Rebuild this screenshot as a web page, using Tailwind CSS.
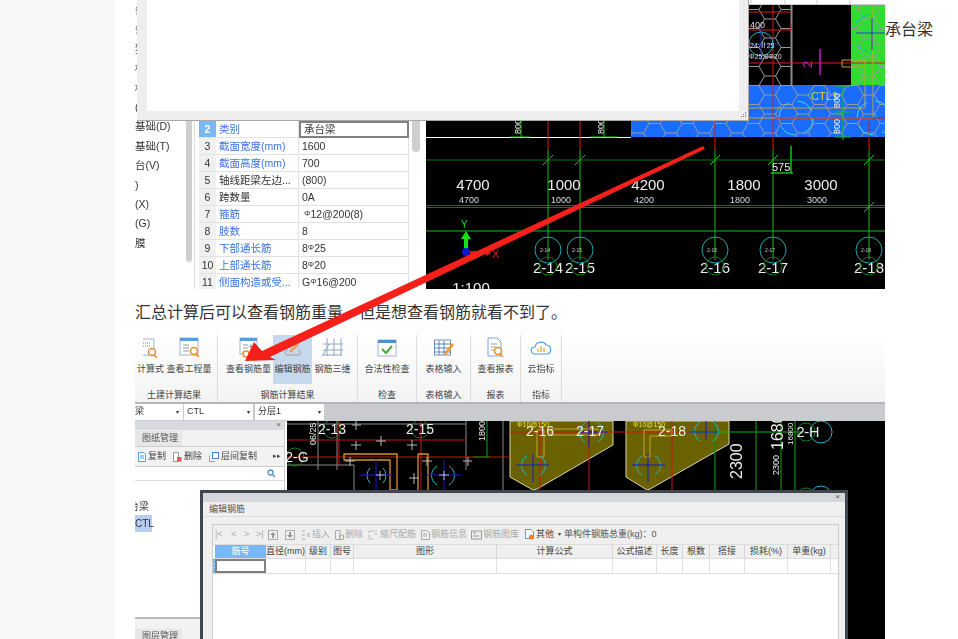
<!DOCTYPE html>
<html lang="zh-CN">
  <head>
    <meta charset="UTF-8" />
    <title>汇总计算后查看钢筋</title>
    <script src="https://cdn.jsdelivr.net/npm/@tailwindcss/browser@4"></script>
  </head>
  <body class="h-[639px] overflow-hidden bg-white font-['Liberation_Sans','Noto_Sans_CJK_SC',sans-serif] text-[#333]">
    <div class="flex h-[639px] relative">
      <div class="w-[115px] shrink-0 bg-[#f8f8f8]"></div>

      <main class="w-[770px] pl-[20px] shrink-0 relative">
        <!-- first screenshot -->
        <section class="relative h-[289px] w-[750px] flex overflow-visible">
          <div class="flex w-full h-[289px] overflow-hidden blur-[0.3px]">
            <!-- element list -->
            <div class="w-[51px] shrink-0 relative overflow-hidden bg-white pt-[1px] text-[10.5px] leading-[19.4px] text-[#333] whitespace-nowrap">
              <div>条</div><div>条</div><div>独</div><div>桩</div><div>桩</div><div>(</div>
              <div>基础(D)</div><div>基础(T)</div><div>台(V)</div><div>)</div><div>(X)</div><div>(G)</div><div>膜</div>
            </div>
            <div class="w-[7px] shrink-0 bg-white pt-[121px]"><div class="h-[141px] w-[6px] rounded-b bg-[#cfcfcf]"></div></div>
            <div class="w-[2px] shrink-0 bg-white border-r border-[#ddd]"></div>
            <!-- property table -->
            <div class="w-[231px] shrink-0 pl-[4px] pt-[121px] bg-white flex">
              <div class="w-[210px] text-[10.5px] leading-[16px] text-[#333]">
                <div class="flex h-[17px]"><div class="w-[17px] bg-[#7ab8f5] text-white font-bold text-center border-b border-[#e2e2e2]">2</div><div class="w-[83px] pl-[3px] text-[#3d73e6] border-b border-r border-[#e2e2e2]">类别</div><div class="w-[110px] pl-[3px] border-2 border-[#808080] leading-[13px]">承台梁</div></div>
                <div class="flex h-[17px]"><div class="w-[17px] bg-[#f0f0f0] text-center border-b border-[#e2e2e2]">3</div><div class="w-[83px] pl-[3px] text-[#3d73e6] border-b border-r border-[#e2e2e2]">截面宽度(mm)</div><div class="w-[110px] pl-[3px] border-b border-r border-[#e2e2e2]">1600</div></div>
                <div class="flex h-[17px]"><div class="w-[17px] bg-[#f0f0f0] text-center border-b border-[#e2e2e2]">4</div><div class="w-[83px] pl-[3px] text-[#3d73e6] border-b border-r border-[#e2e2e2]">截面高度(mm)</div><div class="w-[110px] pl-[3px] border-b border-r border-[#e2e2e2]">700</div></div>
                <div class="flex h-[17px]"><div class="w-[17px] bg-[#f0f0f0] text-center border-b border-[#e2e2e2]">5</div><div class="w-[83px] pl-[3px] border-b border-r border-[#e2e2e2]">轴线距梁左边...</div><div class="w-[110px] pl-[3px] border-b border-r border-[#e2e2e2]">(800)</div></div>
                <div class="flex h-[17px]"><div class="w-[17px] bg-[#f0f0f0] text-center border-b border-[#e2e2e2]">6</div><div class="w-[83px] pl-[3px] border-b border-r border-[#e2e2e2]">跨数量</div><div class="w-[110px] pl-[3px] border-b border-r border-[#e2e2e2]">0A</div></div>
                <div class="flex h-[17px]"><div class="w-[17px] bg-[#f0f0f0] text-center border-b border-[#e2e2e2]">7</div><div class="w-[83px] pl-[3px] text-[#3d73e6] border-b border-r border-[#e2e2e2]">箍筋</div><div class="w-[110px] pl-[3px] border-b border-r border-[#e2e2e2]"><span class="text-[8px] align-[2px] ml-[2px]">Φ</span>12@200(8)</div></div>
                <div class="flex h-[17px]"><div class="w-[17px] bg-[#f0f0f0] text-center border-b border-[#e2e2e2]">8</div><div class="w-[83px] pl-[3px] text-[#3d73e6] border-b border-r border-[#e2e2e2]">肢数</div><div class="w-[110px] pl-[3px] border-b border-r border-[#e2e2e2]">8</div></div>
                <div class="flex h-[17px]"><div class="w-[17px] bg-[#f0f0f0] text-center border-b border-[#e2e2e2]">9</div><div class="w-[83px] pl-[3px] text-[#3d73e6] border-b border-r border-[#e2e2e2]">下部通长筋</div><div class="w-[110px] pl-[3px] border-b border-r border-[#e2e2e2]">8<span class="text-[8px] align-[2px]">Φ</span>25</div></div>
                <div class="flex h-[17px]"><div class="w-[17px] bg-[#f0f0f0] text-center border-b border-[#e2e2e2]">10</div><div class="w-[83px] pl-[3px] text-[#3d73e6] border-b border-r border-[#e2e2e2]">上部通长筋</div><div class="w-[110px] pl-[3px] border-b border-r border-[#e2e2e2]">8<span class="text-[8px] align-[2px]">Φ</span>20</div></div>
                <div class="flex h-[17px]"><div class="w-[17px] bg-[#f0f0f0] text-center border-b border-[#e2e2e2]">11</div><div class="w-[83px] pl-[3px] text-[#3d73e6] border-b border-r border-[#e2e2e2]">侧面构造或受...</div><div class="w-[110px] pl-[3px] border-b border-r border-[#e2e2e2]">G<span class="text-[8px] align-[2px]">Φ</span>16@200</div></div>
              </div>
              <div class="ml-[3px] w-[8px] h-[31px] rounded-b bg-[#cfcfcf]"></div>
            </div>
            <!-- CAD view, coordinates in viewBox match the page -->
            <svg class="shrink-0 block" width="459" height="289" viewBox="426 0 459 289">
              <defs>
                <pattern id="hex" width="33" height="19" patternUnits="userSpaceOnUse">
                  <path d="M0 9.5L5.5 0H16.5L22 9.5L16.5 19H5.5ZM22 9.5H33" fill="none" stroke="#9a9a9a" stroke-width="1" />
                </pattern>
              </defs>
              <rect x="426" y="0" width="459" height="289" fill="#000" />
              <rect x="700" y="0" width="185" height="5" fill="#fff" />
              <path d="M719 0V4.500H885M751 0V4M785 0V4M817 0V4M850 0V4" stroke="#ccc" fill="none" />
              <rect x="749" y="5" width="42" height="80" fill="url(#hex)" />
              <path d="M791.500 5V85" stroke="#888" stroke-width="2" />
              <rect x="851" y="5" width="34" height="80" fill="#2fdc2f" />
              <rect x="851" y="5" width="34" height="80" fill="url(#hex)" />
              <rect x="631" y="85" width="254" height="52" fill="#1a6cff" />
              <rect x="631" y="85" width="254" height="52" fill="url(#hex)" />
              <path d="M426 137.500H631" stroke="#fff" />
              <path d="M749 12H791M749 30H791M791 24V30M749 63H885" stroke="#d81818" />
              <path d="M773 5V150M548 121V150M580 121V150M715 121V150M869 121V150" stroke="#d81818" />
              <path d="M749 108H865V67M749 118H873V5M842 60H865V67H842Z" stroke="#c9a227" fill="none" />
              <path d="M820 49V75" stroke="#d015d0" stroke-width="1.500" />
              <text x="0" y="0" transform="translate(812 68) rotate(-90)" font-size="13" fill="#d015d0">2</text>
              <circle cx="761" cy="44" r="12" fill="none" stroke="#15b5c5" />
              <path d="M761 28V60M745 44H778" stroke="#2030d0" />
              <text x="750" y="28" font-size="9" fill="#ddd">400</text>
              <text x="750" y="48" font-size="7" fill="#ddd">24:Ⅱ25</text>
              <text x="749" y="59" font-size="7" fill="#ddd">Φ25;8Φ20</text>
              <path d="M856 33H885M872 18V50" stroke="#1a40e0" />
              <path d="M857 22A18 18 0 0 1 870 15M857 45A18 18 0 0 0 872 52" stroke="#15b5c5" fill="none" />
              <circle cx="796" cy="118" r="17" fill="none" stroke="#35e0e8" stroke-dasharray="18 9" />
              <circle cx="874" cy="118" r="17" fill="none" stroke="#35e0e8" stroke-dasharray="18 9" />
              <path d="M775 118H885" stroke="#d81818" />
              <text x="811" y="100" font-size="11" fill="#d8d838">CTL1</text>
              <path d="M843 85V140M835 86H851M835 112H851M835 137H851" stroke="#18c018" />
              <text transform="translate(840 108) rotate(-90)" font-size="9" fill="#eee">800</text>
              <text transform="translate(840 134) rotate(-90)" font-size="9" fill="#eee">800</text>
              <text transform="translate(521 134) rotate(-90)" font-size="9" fill="#eee">800</text>
              <text transform="translate(604 134) rotate(-90)" font-size="9" fill="#eee">800</text>
              <path d="M521 121V137M604 121V137M510 137H530M590 137H618" stroke="#18c018" />
              <path d="M426 160H885M426 205.500H885M426 207.500H885" stroke="#0d7a0d" stroke-width="1.200" />
              <path d="M426 231H885" stroke="#12c012" />
              <path d="M548 150V260M580 150V260M715 150V260M773 150V260M869 150V260" stroke="#12c012" />
              <path d="M543 165L553 155M575 165L585 155M710 165L720 155M768 165L778 155M864 165L874 155M864 212L874 202" stroke="#12c012" />
              <path d="M791 146V173M771 173H793" stroke="#12c012" stroke-width="1.500" />
              <text x="772" y="171" font-size="11" fill="#eee">575</text>
              <g fill="#eee" font-size="15" text-anchor="middle">
                <text x="473" y="190">4700</text>
                <text x="564" y="190">1000</text>
                <text x="648" y="190">4200</text>
                <text x="744" y="190">1800</text>
                <text x="821" y="190">3000</text>
                <text x="548" y="273">2-14</text>
                <text x="580" y="273">2-15</text>
                <text x="715" y="273">2-16</text>
                <text x="773" y="273">2-17</text>
                <text x="869" y="273">2-18</text>
                <text x="471" y="293">1:100</text>
              </g>
              <g fill="#ddd" font-size="9" text-anchor="middle">
                <text x="469" y="203">4700</text>
                <text x="561" y="203">1000</text>
                <text x="644" y="203">4200</text>
                <text x="740" y="203">1800</text>
                <text x="817" y="203">3000</text>
              </g>
              <g fill="none" stroke="#18a8a8">
                <circle cx="548" cy="250" r="13" /><circle cx="580" cy="250" r="13" /><circle cx="715" cy="250" r="13" /><circle cx="773" cy="250" r="13" /><circle cx="869" cy="250" r="13" />
              </g>
              <g fill="none" stroke="#0b7a0b">
                <circle cx="548" cy="266" r="9" /><circle cx="580" cy="266" r="9" /><circle cx="715" cy="266" r="9" /><circle cx="773" cy="266" r="9" /><circle cx="869" cy="266" r="9" />
              </g>
              <g fill="#ccc" font-size="5" text-anchor="middle">
                <text x="545" y="252">2-14</text><text x="577" y="252">2-15</text><text x="712" y="252">2-16</text><text x="770" y="252">2-17</text><text x="866" y="252">2-18</text>
              </g>
              <path d="M464 249V239H461L466 231L471 239H468V249Z" fill="#15e015" />
              <circle cx="466" cy="252" r="4" fill="#1414d0" />
              <path d="M470 251H486V249L491 253L486 256V254H470Z" fill="#e01818" />
              <text x="492" y="258" font-size="11" fill="#e01818">X</text>
              <text x="461" y="228" font-size="10" fill="#15e015">Y</text>
            </svg>
          </div>

          <!-- popup covering the top of the screenshot -->
          <div class="absolute left-[2px] top-0 w-[612px] h-[121px] bg-[#eeeeee] border-b border-r border-[#a8a8a8] pl-[10px] pr-[9px] pb-[9px]">
            <div class="h-full bg-white"></div>
            <svg class="absolute right-[1px] bottom-[1px]" width="8" height="8" viewBox="0 0 8 8"><path d="M6 1h1v1H6zM4 3h1v1H4zM6 3h1v1H6zM2 5h1v1H2zM4 5h1v1H4zM6 5h1v1H6z" fill="#777" /></svg>
          </div>
          <div class="absolute left-[750px] top-[20px] text-[16px] leading-[20px] whitespace-nowrap text-[#333]">承台梁</div>
        </section>

        <p class="h-[46px] pt-[13px] text-[16px] leading-[22px] text-[#333] whitespace-nowrap">汇总计算后可以查看钢筋重量，但是想查看钢筋就看不到了。</p>

        <!-- second screenshot -->
        <section class="relative h-[304px] w-[750px] overflow-hidden blur-[0.3px]">
          <!-- ribbon -->
          <div class="h-[67px] bg-gradient-to-b from-white to-[#f3f3f3] flex text-[9px] text-[#444] whitespace-nowrap">
            <div class="w-[83px] border-r border-[#dcdcdc] flex flex-col">
              <div class="h-[49px] flex">
                <div class="w-[31px] flex flex-col items-center pt-[2px]">
                  <svg width="16" height="22" viewBox="0 0 16 22"><rect x="-4" y="2" width="15" height="16" fill="#fff" stroke="#9db6d4" /><path d="M0 6h8M0 9h8" stroke="#c66" stroke-dasharray="1 1" /><circle cx="9" cy="15" r="3.500" fill="#fff" stroke="#e88b2a" stroke-width="1.500" /><path d="M11 18l3 3" stroke="#e88b2a" stroke-width="1.500" /></svg>
                  <span class="mt-[4px]">计算式</span>
                </div>
                <div class="w-[46px] flex flex-col items-center pt-[2px]">
                  <svg width="21" height="22" viewBox="0 0 21 22"><rect x="1" y="1" width="18" height="17" fill="#fff" stroke="#9db6d4" /><rect x="1" y="1" width="18" height="3" fill="#5b9bd8" /><path d="M4 8h6M4 11h6M4 14h6" stroke="#999" /><circle cx="15" cy="14" r="3.500" fill="#fff" stroke="#e88b2a" stroke-width="1.500" /><path d="M17 17l3 3" stroke="#e88b2a" stroke-width="1.500" /></svg>
                  <span class="mt-[4px]">查看工程量</span>
                </div>
              </div>
              <div class="text-center pr-[4px] leading-[12px] mt-[5px]">土建计算结果</div>
            </div>
            <div class="w-[140px] border-r border-[#dcdcdc] flex flex-col">
              <div class="h-[49px] flex pl-[6px]">
                <div class="w-[49px] flex flex-col items-center pt-[2px]">
                  <svg width="20" height="22" viewBox="0 0 20 22"><rect x="1" y="1" width="17" height="16" fill="#fff" stroke="#9db6d4" /><rect x="1" y="1" width="17" height="3" fill="#5b9bd8" /><path d="M4 8h5M4 11h5M12 7v5M10 9.500h5" stroke="#999" /><circle cx="7" cy="17" r="3" fill="#fff" stroke="#e88b2a" stroke-width="1.500" /><path d="M10 17h7" stroke="#e88b2a" stroke-width="1.500" /></svg>
                  <span class="mt-[4px]">查看钢筋量</span>
                </div>
                <div class="w-[39px] bg-[#c7d9ef] flex flex-col items-center pt-[2px]">
                  <svg width="20" height="22" viewBox="0 0 20 22"><path d="M2 16C2 13 4 13 5 13M15 13C18 13 18 18 15 18H5C3 18 2 17 2 16" fill="none" stroke="#999" /><path d="M6 14L14 6L16 8L8 16Z" fill="#f0a060" /></svg>
                  <span class="mt-[4px]">编辑钢筋</span>
                </div>
                <div class="w-[41px] flex flex-col items-center pt-[2px]">
                  <svg width="22" height="22" viewBox="0 0 22 22"><path d="M1 7H21M1 13H21M0 18H20M5 1V19M12 1V19M19 1V19M1 18L7 7" fill="none" stroke="#8fa8c8" /></svg>
                  <span class="mt-[4px]">钢筋三维</span>
                </div>
              </div>
              <div class="text-center leading-[12px] mt-[5px]">钢筋计算结果</div>
            </div>
            <div class="w-[59px] border-r border-[#dcdcdc] flex flex-col">
              <div class="h-[49px] flex flex-col items-center pt-[3px]">
                <svg width="20" height="21" viewBox="0 0 20 21"><rect x="1" y="2" width="18" height="16" fill="#fff" stroke="#9db6d4" /><rect x="1" y="2" width="18" height="3" fill="#4f8fd0" /><path d="M5 11L9 15L15 8" fill="none" stroke="#48a838" stroke-width="2" /></svg>
                <span class="mt-[4px]">合法性检查</span>
              </div>
              <div class="text-center leading-[12px] mt-[5px]">检查</div>
            </div>
            <div class="w-[54px] border-r border-[#dcdcdc] flex flex-col">
              <div class="h-[49px] flex flex-col items-center pt-[3px]">
                <svg width="20" height="21" viewBox="0 0 20 21"><rect x="0.500" y="2" width="16" height="15" fill="#fff" stroke="#6f8fb8" /><path d="M0 6H17M0 10H17M0 14H17M5 3V17M10 3V17" stroke="#5b86bc" /><path d="M10 15L18 5L20 7L12 17Z" fill="#f09a30" /></svg>
                <span class="mt-[4px]">表格输入</span>
              </div>
              <div class="text-center leading-[12px] mt-[5px]">表格输入</div>
            </div>
            <div class="w-[50px] border-r border-[#dcdcdc] flex flex-col">
              <div class="h-[49px] flex flex-col items-center pt-[2px]">
                <svg width="18" height="22" viewBox="0 0 18 22"><path d="M1 1H10L14 5V19H1Z" fill="#fff" stroke="#7fa6cf" /><path d="M4 7H10M4 10H9M4 13H7" stroke="#999" /><circle cx="11" cy="14" r="3.500" fill="#fff" stroke="#e88b2a" stroke-width="1.500" /><path d="M13 17l3 3" stroke="#e88b2a" stroke-width="1.500" /></svg>
                <span class="mt-[4px]">查看报表</span>
              </div>
              <div class="text-center leading-[12px] mt-[5px]">报表</div>
            </div>
            <div class="w-[41px] border-r border-[#dcdcdc] flex flex-col">
              <div class="h-[49px] flex flex-col items-center pt-[3px]">
                <svg width="24" height="21" viewBox="0 0 24 21"><path d="M6 16C1 16 1 9 6 9C7 3 15 3 17 7C23 7 23 16 18 16Z" fill="#fff" stroke="#4f9fe0" stroke-width="1.200" /><path d="M9 14V11M12 14V8M15 14V10" stroke="#f0a030" stroke-width="1.300" /></svg>
                <span class="mt-[4px]">云指标</span>
              </div>
              <div class="text-center leading-[12px] mt-[5px]">指标</div>
            </div>
          </div>

          <!-- combo row -->
          <div class="h-[19px] bg-[#c9cbcf] border-t-2 border-[#b4b6ba] flex gap-[1px] text-[9px] text-[#333]">
            <div class="w-[48px] h-[16px] bg-white flex items-center justify-between pr-[4px]">梁<span class="text-[6px]">▾</span></div>
            <div class="w-[69px] h-[16px] bg-white flex items-center justify-between px-[3px]">CTL<span class="text-[6px]">▾</span></div>
            <div class="w-[69px] h-[16px] ml-[1px] bg-white flex items-center justify-between px-[3px]">分层1<span class="text-[6px]">▾</span></div>
          </div>

          <div class="flex h-[218px]">
            <!-- navigator panel -->
            <div class="w-[150px] shrink-0 bg-white border-r border-[#ccc] flex flex-col text-[9px] text-[#555]">
              <div class="h-[9px] bg-[#d8dadd] relative"><span class="absolute right-[3px] -top-[2px] text-[8px] leading-[12px]">×</span></div>
              <div class="h-[17px] bg-[#f2f2f2] border-b border-[#ccc] flex items-end"><span class="w-[47px] h-[15px] pl-[7px] bg-[#e6e6e6] leading-[15px]">图纸管理</span></div>
              <div class="h-[20px] bg-[#f2f2f2] border-b border-[#ccc] flex items-center pl-[3px] text-[#444] whitespace-nowrap">
                <svg width="8" height="10" viewBox="0 0 8 10"><path d="M.5.5H5.500L7.500 2.500V9.500H.5Z M2 4H6M2 6H6" fill="#fff" stroke="#5b9bd8" /></svg>
                <span class="ml-[2px]">复制</span>
                <svg class="ml-[7px]" width="9" height="10" viewBox="0 0 9 10"><path d="M.5.5H5.500V9.500H.5Z" fill="#fff" stroke="#999" /><rect x="4" y="5" width="4.500" height="4.500" fill="#e05a5a" /></svg>
                <span class="ml-[2px]">删除</span>
                <svg class="ml-[7px]" width="10" height="10" viewBox="0 0 10 10"><rect x="3.500" y=".5" width="6" height="6" fill="#fff" stroke="#3f82d8" /><path d="M.5 3.500V9.500H6" fill="none" stroke="#f09030" /></svg>
                <span class="ml-[2px]">层间复制</span>
                <span class="ml-[16px] text-[7px]">▸▸</span>
              </div>
              <div class="h-[14px] border-b border-[#ddd] flex items-center justify-end pr-[8px]">
                <svg width="9" height="9" viewBox="0 0 9 9"><circle cx="3.500" cy="3.500" r="2.500" fill="none" stroke="#4f8fd0" stroke-width="1.300" /><path d="M5.500 5.500L8 8" stroke="#4f8fd0" stroke-width="1.300" /></svg>
              </div>
              <div class="h-[136px] pt-[17px] text-[10px] text-[#444] leading-[17px] overflow-hidden">
                <div class="-ml-[6px]">台梁</div>
                <div class="w-[17px] bg-[#b6cfee] text-[#333]">CTL</div>
              </div>
              <div class="border-t-2 border-[#bbb] h-[22px] bg-[#f2f2f2] pt-[10px]"><span class="block w-[47px] h-[12px] pl-[7px] bg-[#e6e6e6] leading-[14px]">图层管理</span></div>
            </div>
            <div class="w-[2px] bg-white"></div>
            <!-- CAD view 2 -->
            <svg class="shrink-0 block" width="598" height="218" viewBox="287 421 598 218">
              <rect x="287" y="421" width="598" height="218" fill="#000" />
              <path d="M510 421H613V445L537 489L533 490L510 477Z M626 421H729V444L650 489L647 490L626 477Z" fill="#6a6200" stroke="#d8d8a8" />
              <path d="M287 424H466M318 421V470M337 421V470M466 421V470M503 421V490M287 465H354V490" stroke="#8a8a8a" fill="none" />
              <path d="M287 440H466M287 457H510M510 432H690" stroke="#c81414" />
              <path d="M339 421V465M421 421V490M540 421V490M589 421V490M672 421V490" stroke="#c81414" />
              <path d="M690 432H806" stroke="#15b015" />
              <path d="M715 421V490M756 421V490M781 421V490M795 421V490M487 421V457M473 457H490" stroke="#118a11" stroke-width="1.200" />
              <path d="M344 454H397V490H390V460H344ZM418 454H428V490M418 454V490" fill="none" stroke="#d8951a" stroke-width="1.300" />
              <path d="M537 430H544V457H537ZM551 429H598V435H551ZM644 430H672V436H650V457H644Z" fill="none" stroke="#c8a030" />
              <g fill="none" stroke="#1ab8c8">
                <path d="M370 468A11 11 0 0 0 370 483M383 468A11 11 0 0 1 383 483M437 466A11 11 0 0 0 437 485M449 466A11 11 0 0 1 449 485" />
                <path d="M527 456A11 11 0 0 0 527 475M540 456A11 11 0 0 1 540 475M585 423A11 11 0 0 0 585 442M598 423A11 11 0 0 1 598 442M642 456A11 11 0 0 0 642 475M655 456A11 11 0 0 1 655 475M700 422A11 11 0 0 0 700 441M713 422A11 11 0 0 1 713 441" />
                <circle cx="821" cy="432" r="11" /><circle cx="821" cy="497" r="11" />
              </g>
              <path d="M359 475H393M376 460V490M427 475H461M444 460V490M516 465H549M533 454V482M579 432H607M589 421V448M632 465H665M648 454V482M690 432H718M706 421V440" stroke="#1616d8" />
              <g stroke="#bbb">
                <path d="M352 425H361M356 421V430M376 441H386M381 436V446M356 441V450M351 445H361M407 445H417M412 440V450M345 461H355M350 457V466M376 475H385M380 471V480M444 471V480M439 475H449M409 478H419M414 473V484M422 461H432M427 457V466M463 461H472M468 457V466" />
              </g>
              <g fill="none" stroke="#0d800d">
                <circle cx="332" cy="429" r="9" /><circle cx="420" cy="429" r="9" /><circle cx="295" cy="457" r="9" /><circle cx="806" cy="432" r="9" /><circle cx="806" cy="497" r="9" />
              </g>
              <g fill="#eee" font-size="14" text-anchor="middle">
                <text x="332" y="434">2-13</text><text x="420" y="434">2-15</text><text x="297" y="462">2-G</text>
                <text x="540" y="436">2-16</text><text x="590" y="436">2-17</text><text x="672" y="436">2-18</text><text x="808" y="437">2-H</text>
              </g>
              <text transform="translate(742 479) rotate(-90)" font-size="16" fill="#eee">2300</text>
              <text transform="translate(779 475) rotate(-90)" font-size="9" fill="#eee">2300</text>
              <text transform="translate(783 450) rotate(-90)" font-size="16" fill="#eee">1680</text>
              <text transform="translate(793 445) rotate(-90)" font-size="8" fill="#eee">16800</text>
              <text transform="translate(485 441) rotate(-90)" font-size="9" fill="#eee">1800</text>
              <text transform="translate(316 445) rotate(-90)" font-size="9" fill="#eee">06/25</text>
              <text x="517" y="427" font-size="7" fill="#eee040">Φ10@150</text>
              <text x="633" y="427" font-size="7" fill="#eee040">Φ10@150</text>
            </svg>
          </div>

          <!-- edit rebar dialog -->
          <div class="absolute left-[65px] top-[155px] w-[648px] h-[170px] border-[3px] border-[#3f4650] bg-[#f0f0f0] text-[9px] text-[#555] whitespace-nowrap">
            <div class="h-[9px] bg-[#d4d6d9] relative"><span class="absolute right-[5px] -top-[2px] text-[8px] leading-[12px]">×</span></div>
            <div class="h-[15px] border-b border-[#ddd] pl-[6px] leading-[15px]">编辑钢筋</div>
            <div class="ml-[9px] mr-[6px] mt-[7px] bg-white border border-[#ccc] h-[140px]">
              <div class="h-[19px] bg-[#efefef] flex items-center pl-[2px] text-[#aaa]">
                <span class="w-[16px]">|&lt;</span><span class="w-[13px]">&lt;</span><span class="w-[12px]">&gt;</span><span class="w-[11px]">&gt;|</span>
                <svg class="ml-[1px]" width="12" height="10" viewBox="0 0 12 10"><rect x=".5" y=".5" width="9" height="9" fill="none" stroke="#aaa" /><path d="M5 2L8 5H6V8H4V5H2Z" fill="#999" /></svg>
                <svg class="ml-[5px]" width="12" height="10" viewBox="0 0 12 10"><rect x=".5" y=".5" width="9" height="9" fill="none" stroke="#aaa" /><path d="M5 8L2 5H4V2H6V5H8Z" fill="#999" /></svg>
                <svg class="ml-[4px]" width="10" height="10" viewBox="0 0 10 10"><path d="M1 1H4M1 5H4M1 9H4M6 4H9M6 6H9" stroke="#aaa" /></svg>
                <span class="ml-[1px]">插入</span>
                <svg class="ml-[5px]" width="9" height="10" viewBox="0 0 9 10"><path d="M.5.5H5V9.500H.5Z" fill="none" stroke="#aaa" /><path d="M5 5H8.500V9.500H5Z" fill="none" stroke="#aaa" /></svg>
                <span class="ml-[1px]">删除</span>
                <svg class="ml-[5px]" width="10" height="10" viewBox="0 0 10 10"><path d="M1 3V1H9M1 5V9H5M8 3V5" fill="none" stroke="#aaa" stroke-dasharray="2 1" /></svg>
                <span class="ml-[2px]">缩尺配筋</span>
                <svg class="ml-[5px]" width="9" height="10" viewBox="0 0 9 10"><path d="M.5.5H6L8.500 3V9.500H.5ZM2 4H6M2 6H6" fill="none" stroke="#aaa" /></svg>
                <span class="ml-[1px]">钢筋信息</span>
                <svg class="ml-[4px]" width="11" height="10" viewBox="0 0 11 10"><rect x=".5" y="1" width="10" height="8" fill="none" stroke="#999" /><path d="M2 3H5M2 6H8" stroke="#999" /></svg>
                <span class="ml-[1px]">钢筋图库</span>
                <svg class="ml-[6px]" width="10" height="11" viewBox="0 0 10 11"><path d="M.5.5H6L8.500 3V9.500H.5Z" fill="#fff" stroke="#5b9bd8" /><circle cx="6.500" cy="8" r="2.500" fill="#f08020" /></svg>
                <span class="ml-[1px] text-[#444]">其他</span>
                <span class="ml-[4px] text-[6px] text-[#444]">▾</span>
                <span class="ml-[3px] text-[#555]">单构件钢筋总重(kg)：0</span>
              </div>
              <div class="flex h-[15px] bg-[#f0f0f0] border-y border-[#ddd] leading-[13px] text-center text-[#444]">
                <div class="w-[2px] bg-white"></div>
                <div class="w-[51px] bg-[#7ab8f5] text-white">筋号</div>
                <div class="w-[40px] border-r border-[#d6d6d6]">直径(mm)</div>
                <div class="w-[25px] border-r border-[#d6d6d6]">级别</div>
                <div class="w-[23px] border-r border-[#d6d6d6]">图号</div>
                <div class="w-[143px] border-r border-[#d6d6d6]">图形</div>
                <div class="w-[116px] border-r border-[#d6d6d6]">计算公式</div>
                <div class="w-[44px] border-r border-[#d6d6d6]">公式描述</div>
                <div class="w-[26px] border-r border-[#d6d6d6]">长度</div>
                <div class="w-[27px] border-r border-[#d6d6d6]">根数</div>
                <div class="w-[35px] border-r border-[#d6d6d6]">搭接</div>
                <div class="w-[43px] border-r border-[#d6d6d6]">损耗(%)</div>
                <div class="w-[43px] border-r border-[#d6d6d6]">单重(kg)</div>
              </div>
              <div class="flex h-[15px] border-b border-[#ddd]">
                <div class="w-[2px] bg-[#7ab8f5] text-white text-[8px] leading-[14px]">1</div>
                <div class="w-[51px] border-2 border-[#808080]"></div>
                <div class="w-[40px] border-r border-[#e2e2e2]"></div>
                <div class="w-[25px] border-r border-[#e2e2e2]"></div>
                <div class="w-[23px] border-r border-[#e2e2e2]"></div>
                <div class="w-[143px] border-r border-[#e2e2e2]"></div>
                <div class="w-[116px] border-r border-[#e2e2e2]"></div>
                <div class="w-[44px] border-r border-[#e2e2e2]"></div>
                <div class="w-[26px] border-r border-[#e2e2e2]"></div>
                <div class="w-[27px] border-r border-[#e2e2e2]"></div>
                <div class="w-[35px] border-r border-[#e2e2e2]"></div>
                <div class="w-[43px] border-r border-[#e2e2e2]"></div>
                <div class="w-[43px] border-r border-[#e2e2e2]"></div>
              </div>
            </div>
          </div>
        </section>

        <!-- red arrow drawn across both screenshots -->
        <svg class="absolute left-0 top-0 pointer-events-none" width="770" height="400" viewBox="115 0 770 400">
          <path d="M703 146L705 149L270 357L276 360L245 361L254 342L262 351Z" fill="#f5201a" />
        </svg>
      </main>
    </div>
  </body>
</html>
